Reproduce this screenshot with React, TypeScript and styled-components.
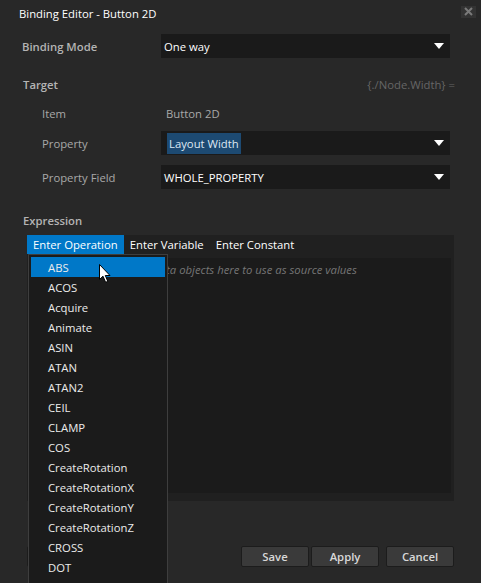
import React from 'react'
import styled, { createGlobalStyle } from 'styled-components'

const GlobalStyle = createGlobalStyle`
  html, body {
    margin: 0;
    padding: 0;
    background: #282828;
  }
  body {
    font-family: "Open Sans", "Noto Sans", sans-serif;
    font-size: 11.3px;
  }
`

const operations = [
  'ABS', 'ACOS', 'Acquire', 'Animate', 'ASIN', 'ATAN', 'ATAN2', 'CEIL', 'CLAMP', 'COS',
  'CreateRotation', 'CreateRotationX', 'CreateRotationY', 'CreateRotationZ', 'CROSS', 'DOT',
]

const Window = styled.div`
  position: relative;
  width: 481px;
  height: 583px;
  overflow: hidden;
  background: #282828;
  color: #aaa;
`

const TitleBar = styled.div`
  height: 26px;
  display: flex;
  align-items: center;
  justify-content: space-between;
  padding: 0 5px 0 19px;
  color: #fff;
`

const CloseBox = styled.div`
  width: 15px;
  height: 12px;
  margin-top: -3px;
  background: #333;
  display: flex;
  align-items: center;
  justify-content: center;
`

const Content = styled.div`
  padding: 0 27px 0 22px;
`

const Row = styled.div<{ top: number; indent?: boolean }>`
  display: grid;
  grid-template-columns: ${p => (p.indent ? '119px' : '139px')} 1fr;
  align-items: center;
  margin-top: ${p => p.top}px;
  padding-left: ${p => (p.indent ? 20 : 0)}px;
  min-height: 20px;
`

const Label = styled.div<{ strong?: boolean }>`
  color: ${p => (p.strong ? '#b4b4b4' : '#a8a8a8')};
  font-weight: ${p => (p.strong ? 600 : 400)};
`

const Value = styled.div`
  color: #a8a8a8;
  padding-left: 5px;
`

const Select = styled.div`
  height: 24px;
  margin-right: 4px;
  background: #1a1a1a;
  display: flex;
  align-items: center;
  justify-content: space-between;
  padding: 0 3px 0 3px;
  color: #fff;
`

const Selected = styled.span`
  background: #1d4a72;
  color: #dde8f2;
  padding: 3px 2px;
  margin-left: 3px;
`

const Arrow = styled.span`
  width: 0;
  height: 0;
  margin-right: 3px;
  border-left: 5px solid transparent;
  border-right: 5px solid transparent;
  border-top: 6px solid #fff;
`

const SectionHead = styled.div`
  display: flex;
  justify-content: space-between;
  align-items: center;
  margin-top: 16px;
  height: 20px;
  padding-left: 1px;
`

const Path = styled.span`
  color: #666;
  margin-right: -1px;
`

const ExprLabel = styled(Label)`
  margin-top: 22px;
  height: 20px;
  line-height: 20px;
  padding-left: 1px;
`

const Panel = styled.div`
  margin: 4px 0 0 5px;
  height: 266px;
  background: #202020;
  display: flex;
  flex-direction: column;
`

const Tabs = styled.div`
  display: flex;
  height: 19px;
`

const Tab = styled.div<{ active?: boolean }>`
  padding: 0 6px;
  display: flex;
  align-items: center;
  color: #fff;
  background: ${p => (p.active ? '#0078c8' : 'transparent')};
`

const DropArea = styled.div`
  flex: 1;
  margin: 4px 3px 8px 3px;
  background: #1b1b1b;
  color: #767676;
  font-style: italic;
  padding: 4px 0 0 96px;
`

const Footer = styled.div`
  display: flex;
  margin: 45px 0 0 5px;
`

const Button = styled.div<{ gap?: number }>`
  width: 66px;
  height: 19px;
  margin-left: ${p => p.gap ?? 0}px;
  background: #3a3a3a;
  border: 1px solid #1c1c1c;
  border-radius: 2px;
  color: #d8d8d8;
  font-weight: 600;
  display: flex;
  align-items: center;
  justify-content: center;
`

const Spacer = styled.div`
  flex: 1;
`

const Menu = styled.div`
  position: absolute;
  left: 28px;
  top: 254px;
  width: 138px;
  height: 340px;
  padding-top: 2px;
  background: #1b1b1b;
  border: 1px solid #3e3e3e;
`

const MenuItem = styled.div<{ active?: boolean }>`
  height: 20px;
  margin: 0 2px;
  padding-left: 17px;
  display: flex;
  align-items: center;
  color: #ececec;
  background: ${p => (p.active ? '#0078c8' : 'transparent')};
`

const Cursor = styled.svg`
  position: absolute;
  left: 99px;
  top: 264px;
`

export default function App() {
  return (
    <>
      <GlobalStyle />
      <Window>
        <TitleBar>
          <span>Binding Editor - Button 2D</span>
          <CloseBox>
            <svg width="9" height="9" viewBox="0 0 9 9">
              <path d="M1 1 L8 8 M8 1 L1 8" stroke="#7a7a7a" strokeWidth="2" />
            </svg>
          </CloseBox>
        </TitleBar>
        <Content>
          <Row top={8}>
            <Label strong>Binding Mode</Label>
            <Select>
              <span>One way</span>
              <Arrow />
            </Select>
          </Row>
          <SectionHead>
            <Label strong>Target</Label>
            <Path>{'{./Node.Width} ='}</Path>
          </SectionHead>
          <Row top={9} indent>
            <Label>Item</Label>
            <Value>Button 2D</Value>
          </Row>
          <Row top={8} indent>
            <Label>Property</Label>
            <Select>
              <Selected>Layout Width</Selected>
              <Arrow />
            </Select>
          </Row>
          <Row top={10} indent>
            <Label>Property Field</Label>
            <Select>
              <span>WHOLE_PROPERTY</span>
              <Arrow />
            </Select>
          </Row>
          <ExprLabel strong>Expression</ExprLabel>
          <Panel>
            <Tabs>
              <Tab active>Enter Operation</Tab>
              <Tab>Enter Variable</Tab>
              <Tab>Enter Constant</Tab>
            </Tabs>
            <DropArea>Drag data objects here to use as source values</DropArea>
          </Panel>
          <Footer>
            <Button aria-hidden="true" />
            <Spacer />
            <Button>Save</Button>
            <Button gap={2}>Apply</Button>
            <Button gap={7}>Cancel</Button>
          </Footer>
        </Content>
        <Menu>
          {operations.map((op, i) => (
            <MenuItem key={op} active={i === 0}>{op}</MenuItem>
          ))}
        </Menu>
        <Cursor width="13" height="20" viewBox="0 0 13 20">
          <path d="M0.5 0.5 L0.5 15.5 L4 12.2 L6.6 18.3 L8.8 17.4 L6.3 11.5 L11 11.5 Z" fill="#fff" stroke="#000" strokeWidth="1" />
        </Cursor>
      </Window>
    </>
  )
}
